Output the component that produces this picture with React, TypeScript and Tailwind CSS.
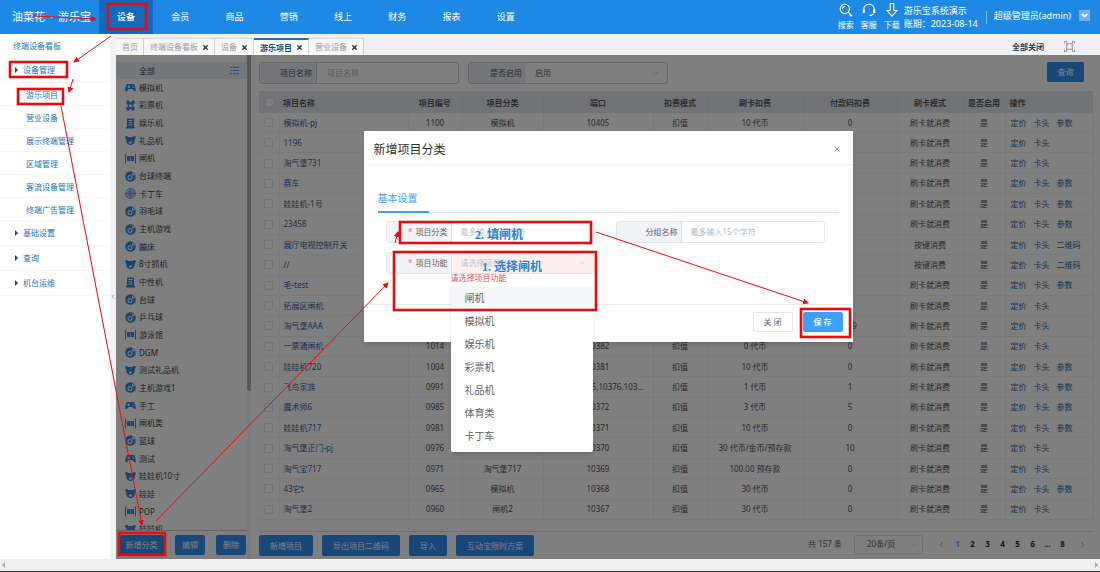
import React from "react";
import { ChevronDown, ChevronLeft, ChevronRight, ChevronUp, X } from "lucide-react";

type IconKind = "pad" | "ticket" | "cabinet" | "bear" | "gate" | "ball" | "wheel";

const NAV = ["设备", "会员", "商品", "营销", "线上", "财务", "报表", "设置"];

const TABS = [
  { label: "首页", closable: false },
  { label: "终端设备看板", closable: true },
  { label: "设备", closable: true },
  { label: "游乐项目", closable: true, active: true },
  { label: "营业设备", closable: true },
];

const SUB_MENU = ["游乐项目", "营业设备", "展示终端管理", "区域管理", "客流设备管理", "终端广告管理"];

const CATEGORIES: [IconKind, string][] = [
  ["pad", "模拟机"],
  ["ticket", "彩票机"],
  ["cabinet", "娱乐机"],
  ["bear", "礼品机"],
  ["gate", "闸机"],
  ["ball", "台球终端"],
  ["wheel", "卡丁车"],
  ["ball", "羽毛球"],
  ["ball", "主机游戏"],
  ["ball", "蹦床"],
  ["bear", "8寸抓机"],
  ["cabinet", "中性机"],
  ["ball", "台球"],
  ["ball", "乒乓球"],
  ["gate", "游泳馆"],
  ["ball", "DGM"],
  ["bear", "测试礼品机"],
  ["ball", "主机游戏1"],
  ["pad", "手工"],
  ["gate", "闸机类"],
  ["ball", "篮球"],
  ["pad", "测试"],
  ["bear", "娃娃机10寸"],
  ["bear", "娃娃"],
  ["gate", "POP"],
  ["bear", "娃娃机"],
];

type Row = [string, string, string, string, string, string, string, string];

// name, code, category, port, swipe charge, pay-code charge, swipe mode, third action
const ROWS: Row[] = [
  ["模拟机-pj", "1100", "模拟机", "10405", "10 代币", "0", "刷卡就消费", "参数"],
  ["1196", "1099", "闸机", "10404", "1 代币", "0", "刷卡就消费", ""],
  ["淘气堡731", "1098", "闸机", "10403", "1 代币", "0", "刷卡就消费", ""],
  ["赛车", "1097", "模拟机", "10402", "1 代币", "0", "刷卡就消费", "参数"],
  ["娃娃机-1号", "1096", "礼品机", "10401", "1 代币", "0", "刷卡就消费", "参数"],
  ["23458", "1095", "模拟机", "10400", "1 代币", "0", "刷卡就消费", "参数"],
  ["展厅电视控制开关", "1094", "台球终端", "10399", "1 代币", "0", "按键消费", "二维码"],
  ["//", "1093", "台球终端", "10398", "1 代币", "0", "按键消费", "二维码"],
  ["毛-test", "1092", "模拟机", "10397", "1 代币", "0", "刷卡就消费", "参数"],
  ["拓展区闸机", "1091", "闸机", "10396", "1 代币", "0", "刷卡就消费", ""],
  ["淘气堡AAA", "1015", "闸机", "10383", "1 代币", "199", "刷卡就消费", ""],
  ["一票通闸机", "1014", "闸机", "10382", "0 代币", "0", "刷卡就消费", ""],
  ["娃娃机720", "1004", "礼品机", "10381", "10 代币", "0", "刷卡就消费", "参数"],
  ["飞鸟家族", "0991", "模拟机", "10374,10375,10376,10377,10378", "1 代币", "1", "刷卡就消费", "参数"],
  ["魔术师6", "0985", "模拟机", "10372", "3 代币", "5", "刷卡就消费", "参数"],
  ["娃娃机717", "0981", "礼品机", "10371", "10 代币", "0", "刷卡就消费", "参数"],
  ["淘气堡正门-pj", "0976", "闸机", "10370", "30 代币/金币/预存款", "10", "刷卡就消费", ""],
  ["淘气宝717", "0971", "淘气堡717", "10369", "100.00 预存款", "0", "刷卡就消费", ""],
  ["43它t", "0965", "模拟机", "10368", "30 代币", "0", "刷卡就消费", "参数"],
  ["淘气堡2", "0960", "闸机2", "10367", "30 代币", "0", "刷卡就消费", ""],
];

const OPTIONS = ["闸机", "模拟机", "娱乐机", "彩票机", "礼品机", "体育类", "卡丁车"];

function CategoryIcon({ kind }: { kind: IconKind }) {
  return (
    <svg viewBox="0 0 22 22" className="size-[11px] shrink-0 text-[#3488e0]" fill="currentColor" aria-hidden="true">
      {kind === "pad" && (
        <path
          fillRule="evenodd"
          d="M5 4h12c2.500 0 4 5 4.500 12 .2 3-2.500 3.500-4 1.500L15 14H7l-2.500 3.500C3 19.500.3 19 .5 16 1 9 2.500 4 5 4Zm1.500 3v1.500H5v2h1.500V12h2v-1.500H10v-2H8.500V7h-2Zm8 0v2h2V7h-2Zm2 3v2h2v-2h-2Z"
        />
      )}
      {kind === "ticket" && (
        <path
          fillRule="evenodd"
          d="M3 1h5a3 3 0 0 0 6 0h5v7a3 3 0 0 0 0 6v7h-5a3 3 0 0 0-6 0H3v-7a3 3 0 0 0 0-6V1Zm8 6-1.500 3H7l2 2-1 3.500 3-2 3 2-1-3.500 2-2h-2.500L11 7Z"
        />
      )}
      {kind === "cabinet" && (
        <path fillRule="evenodd" d="M4 1h14v17h2v3H2v-3h2V1Zm3 3v2h8V4H7Zm0 4.500v2h8v-2H7ZM7 13v2h8v-2H7Z" />
      )}
      {kind === "bear" && (
        <path
          fillRule="evenodd"
          d="M1 2.500C3 1.500 5 2 6.500 4h9C17 2 19 1.500 21 2.500c1 2.500.3 4.500-1.500 6 .8 7-2.500 11.500-8.500 11.500S1.700 15.500 2.500 8.500C.7 7 0 5 1 2.500ZM11 13c-2 0-3 1-3 2.200 0 1.300 1.300 2.300 3 2.300s3-1 3-2.300c0-1.200-1-2.200-3-2.200Z"
        />
      )}
      {kind === "gate" && <path d="M0 1h2v20H0V1Zm20 0h2v20h-2V1ZM4 6h6.500v10H4V6Zm7.500 0H18v10h-6.500V6Z" />}
      {kind === "ball" && (
        <>
          <path
            fillRule="evenodd"
            d="M11 .5a10.500 10.500 0 1 1 0 21 10.500 10.500 0 0 1 0-21ZM10 8a5 5 0 1 0 0 10 5 5 0 0 0 0-10Zm6.500-5a3 3 0 1 0 0 6 3 3 0 0 0 0-6Z"
          />
          <circle cx="10" cy="13" r="2.800" />
          <circle cx="17" cy="5.500" r="1.400" />
        </>
      )}
      {kind === "wheel" && (
        <g fill="none" stroke="currentColor" strokeWidth="2">
          <circle cx="11" cy="11" r="9.500" />
          <circle cx="11" cy="11" r="5.500" />
          <circle cx="11" cy="11" r="1.500" />
          <path d="M11 1.500v8M11 12.500v8M1.500 11h8M12.500 11h8M4.500 4.500l5 5M12.500 12.500l5 5M17.500 4.500l-5 5M9.500 12.500l-5 5" strokeWidth="1.200" />
        </g>
      )}
    </svg>
  );
}

function Header() {
  const tools = [
    {
      label: "搜索",
      icon: (
        <>
          <circle cx="10" cy="10" r="8" />
          <path d="M16 16l6.500 6.500M6 10a4 4 0 0 1 4-4M18 22h4" />
        </>
      ),
    },
    {
      label: "客服",
      icon: (
        <>
          <path d="M3 15V11a9 9 0 0 1 18 0v4" />
          <path d="M3 11v6M21 11v6" strokeWidth="3.500" />
          <path d="M20 18c-1 2.500-3 3.500-7 3.500" />
        </>
      ),
    },
    { label: "下载", icon: <path d="M9 1h6v12h5.500L12 22.500 3.500 13H9V1Z" /> },
  ];
  return (
    <header className="flex h-[34px] shrink-0 items-stretch bg-[#1e88e5] text-[9px] text-white">
      <div className="flex w-[99px] items-center gap-[5px] pl-3 text-[11px] whitespace-nowrap">
        <span>油菜花</span>
        <span>·</span>
        <span>游乐宝</span>
      </div>
      <nav className="flex w-[434px]">
        {NAV.map((item, i) => (
          <a
            key={item}
            href="#"
            className={`flex flex-1 items-center justify-center ${i === 0 ? "bg-[#1269c0] font-medium" : ""}`}
          >
            {item}
          </a>
        ))}
      </nav>
      <div className="ml-auto flex items-center pr-[10px] whitespace-nowrap">
        <div className="flex gap-[7px]">
          {tools.map((t) => (
            <button key={t.label} type="button" className="flex flex-col items-center text-[8px] leading-[12px]">
              <svg
                viewBox="0 0 24 24"
                className="mb-[2px] size-[14px]"
                fill="none"
                stroke="currentColor"
                strokeWidth="1.800"
                aria-hidden="true"
              >
                {t.icon}
              </svg>
              {t.label}
            </button>
          ))}
        </div>
        <div className="ml-[4px] leading-[13px]">
          <div>游乐宝系统演示</div>
          <div>账期：2023-08-14</div>
        </div>
        <div className="ml-2 h-[13px] w-px bg-white/50" />
        <div className="mb-[3px] ml-[7px]">超级管理员(admin)</div>
        <button type="button" aria-label="账户菜单" className="mb-[3px] ml-2 flex size-[11px] items-center justify-center bg-[#6fb2ef]">
          <ChevronDown className="size-[9px]" strokeWidth={5} />
        </button>
      </div>
    </header>
  );
}

function Sidebar() {
  const group = "flex h-[25px] items-center gap-[5px] border-b border-[#f6f6f6] pl-[15px]";
  const arrow = <span className="h-0 w-0 border-y-[3px] border-l-[3px] border-y-transparent border-l-[#20476b]" />;
  return (
    <aside className="flex w-[116px] shrink-0 text-[8px] text-[#2277b5]">
      <div className="flex-1 bg-white">
        <a href="#" className="flex h-[24px] items-center pl-[13px]">终端设备看板</a>
        <a href="#" className={group}>{arrow}设备管理</a>
        {SUB_MENU.map((s) => (
          <a key={s} href="#" className="flex h-[23px] items-center border-b border-[#f6f6f6] pt-[2px] pl-[26px]">{s}</a>
        ))}
        {["基础设置", "查询", "机台运维"].map((s) => (
          <a key={s} href="#" className={group}>{arrow}{s}</a>
        ))}
      </div>
      <button type="button" aria-label="收起菜单" className="flex w-[6px] items-center justify-center bg-[#f2f2f2] text-[#777777]">
        <ChevronLeft className="size-[7px]" strokeWidth={3} />
      </button>
    </aside>
  );
}

function TabBar() {
  return (
    <div className="flex h-[21px] items-end bg-[#f0f0f0] text-[8px]">
      {TABS.map((t) => (
        <div
          key={t.label}
          className={`flex h-[17px] items-center gap-[4px] border-r border-[#cfcfcf] pr-[5px] pl-[6px] ${
            t.active
              ? "border-t-2 border-t-[#1d6fae] bg-white font-bold text-[#20496f]"
              : "border-t border-t-[#d6d6d6] bg-[#f7f7f7] text-[#999999]"
          }`}
        >
          <a href="#">{t.label}</a>
          {t.closable && (
            <button type="button" aria-label={`关闭${t.label}`} className="text-[#2d3f52]">
              <X className="size-[7px]" strokeWidth={5} />
            </button>
          )}
        </div>
      ))}
      <div className="ml-auto flex h-[17px] items-center gap-5 pr-[25px]">
        <button type="button" className="font-bold text-[#20395c]">全部关闭</button>
        <button type="button" aria-label="全屏">
          <svg viewBox="0 0 22 22" className="size-[11px] text-[#8a8a8a]" fill="none" stroke="currentColor" strokeWidth="1.800" aria-hidden="true">
            <path d="M5.500 5.500h11v11h-11ZM1 5V1h4l1 4.500M17 5.500 17 1h4v4M21 17v4h-4l-.5-4.500M5.500 16.500 5 21H1v-4" />
          </svg>
        </button>
      </div>
    </div>
  );
}

function PrimaryButton({ children, className = "" }: { children: React.ReactNode; className?: string }) {
  return (
    <button type="button" className={`rounded-[2px] bg-[#3190f2] whitespace-nowrap text-white ${className}`}>
      {children}
    </button>
  );
}

function CategoryPanel() {
  return (
    <section className="flex w-[131px] shrink-0 flex-col text-[#444444]">
      <div className="mt-[7px] flex h-[17px] shrink-0 items-center justify-between bg-[#e9f0f7] pr-2 pl-[23px]">
        <span>全部</span>
        <svg viewBox="0 0 20 20" className="size-[9px] text-[#3f8fe0]" stroke="currentColor" strokeWidth="2" aria-hidden="true">
          <path d="M0 3h4M6 3h14M0 10h4M6 10h14M0 17h4M6 17h14" />
        </svg>
      </div>
      <div className="min-h-0 shrink grow basis-[0px] overflow-hidden">
        <ul className="grid h-[459px] auto-rows-fr">
          {CATEGORIES.map(([kind, label]) => (
            <li key={label} className="flex items-center gap-[3px] pl-[9px]">
              <CategoryIcon kind={kind} />
              {label}
            </li>
          ))}
        </ul>
      </div>
      <div className="flex h-[29px] shrink-0 items-center justify-between border-t border-[#c8c8c8] pr-px pl-[3px]">
        <PrimaryButton className="h-5 w-[45px]">新增分类</PrimaryButton>
        <PrimaryButton className="h-5 w-[30px]">编辑</PrimaryButton>
        <PrimaryButton className="h-5 w-[30px]">删除</PrimaryButton>
      </div>
    </section>
  );
}

function ProjectTable() {
  const th = "border-r border-[#dcdfe6] p-0 pt-[2px] text-center font-bold";
  const thLeft = "p-0 pt-[2px] pl-[4px] text-left font-bold";
  const td = "truncate border-r border-b border-[#f0f2f6] p-0 text-center";
  const box = "mx-auto block size-[9px] appearance-none rounded-[1px] border border-[#e2e5ea] bg-white";
  return (
    <table className="mt-[7px] h-[429px] w-full table-fixed border-collapse leading-[12px] text-[#4e5054]">
      <colgroup>
        <col className="w-[20px]" />
        <col className="w-[129px]" />
        <col className="w-[54px]" />
        <col className="w-[81px]" />
        <col className="w-[110px]" />
        <col className="w-[54px]" />
        <col className="w-[96px]" />
        <col className="w-[94px]" />
        <col className="w-[66px]" />
        <col className="w-[42px]" />
        <col className="w-[88px]" />
      </colgroup>
      <thead>
        <tr className="h-[22px] bg-[#e4e7ed] text-[#55585e]">
          <th className="p-0"><input type="checkbox" aria-label="全选" className={box} /></th>
          <th className={thLeft}>项目名称</th>
          <th className={th}>项目编号</th>
          <th className={th}>项目分类</th>
          <th className={th}>端口</th>
          <th className={th}>扣费模式</th>
          <th className={th}>刷卡扣费</th>
          <th className={th}>付款码扣费</th>
          <th className={th}>刷卡模式</th>
          <th className={th}>是否启用</th>
          <th className={thLeft}>操作</th>
        </tr>
      </thead>
      <tbody>
        {ROWS.map(([name, code, cat, port, charge, pay, mode, extra]) => (
          <tr key={code}>
            <td className={td}><input type="checkbox" aria-label={`选择${name}`} className={box} /></td>
            <td className="truncate border-r border-b border-[#f0f2f6] p-0 pl-[4px] text-left">
              <a href="#" className="text-[#1f679f]">{name}</a>
            </td>
            <td className={td}>{code}</td>
            <td className={td}>{cat}</td>
            <td className="truncate border-r border-b border-[#f0f2f6] px-[5px] py-0 text-center">{port}</td>
            <td className={td}>扣值</td>
            <td className={td}>{charge}</td>
            <td className={td}>{pay}</td>
            <td className={td}>{mode}</td>
            <td className={td}>是</td>
            <td className="border-r border-b border-[#f0f2f6] p-0 pl-[5px]">
              <div className="flex gap-[7px] whitespace-nowrap text-[#1f679f]">
                <a href="#">定价</a>
                <a href="#">卡头</a>
                {extra && <a href="#">{extra}</a>}
              </div>
            </td>
          </tr>
        ))}
      </tbody>
    </table>
  );
}

function ProjectPanel() {
  const label = "flex items-center justify-end bg-[#e9ecf3] pr-[4px] text-[#555555]";
  return (
    <section className="flex min-w-0 flex-1 flex-col pr-[7px] pl-[8px]">
      <div className="mt-[7px] flex gap-[9px] pr-[9px]">
        <div className="flex h-[22px] w-[200px] rounded-[3px] border border-[#c8cbd2]">
          <label htmlFor="project-name" className={`${label} w-[57px] border-r border-[#c8cbd2]`}>项目名称</label>
          <input id="project-name" placeholder="项目名称" className="min-w-0 flex-1 pl-[10px] placeholder:text-[#b4b7bd]" />
        </div>
        <div className="relative flex h-[22px] w-[200px] rounded-[3px] border border-[#c8cbd2]">
          <label htmlFor="enabled" className={`${label} w-[57px]`}>是否启用</label>
          <select id="enabled" className="min-w-0 flex-1 appearance-none pl-[9px] text-[#666666]">
            <option>启用</option>
            <option>停用</option>
          </select>
          <ChevronDown className="pointer-events-none absolute top-[6px] right-[7px] size-[9px] text-[#b0b3ba]" />
        </div>
        <PrimaryButton className="ml-auto h-[20px] w-[37px]">查询</PrimaryButton>
      </div>
      <ProjectTable />
      <div className="mt-auto flex h-[28px] items-center gap-[9px] border-t border-[#dcdfe6]">
        <PrimaryButton className="h-[21px] px-[11px]">新增项目</PrimaryButton>
        <PrimaryButton className="h-[21px] px-[11px]">导出项目二维码</PrimaryButton>
        <PrimaryButton className="h-[21px] px-[11px]">导入</PrimaryButton>
        <PrimaryButton className="h-[21px] px-[11px]">互动宝限时方案</PrimaryButton>
        <div className="mb-[3px] ml-auto flex items-center pr-[2px] text-[#606266]">
          <span className="pr-[2px]">共 157 条</span>
          <div className="relative ml-[10px]">
            <select aria-label="每页条数" className="h-[19px] w-[69px] appearance-none rounded-[2px] border border-[#dcdfe6] pl-[12px]">
              <option>20条/页</option>
            </select>
            <ChevronDown className="pointer-events-none absolute top-[6px] right-[5px] size-[7px] text-[#c0c4cc]" />
          </div>
          <nav aria-label="分页" className="ml-[9px] flex font-bold text-[#303133]">
            <button type="button" aria-label="上一页" className="flex w-[18px] items-center justify-center">
              <ChevronLeft className="size-[9px] text-[#909399]" />
            </button>
            {["1", "2", "3", "4", "5", "6", "...", "8"].map((p) => (
              <button key={p} type="button" className={`w-[15px] ${p === "1" ? "text-[#409eff]" : ""}`}>{p}</button>
            ))}
            <button type="button" aria-label="下一页" className="ml-[3px] flex w-[18px] items-center justify-center">
              <ChevronRight className="size-[9px] text-[#909399]" />
            </button>
          </nav>
        </div>
      </div>
    </section>
  );
}

function CategoryDialog() {
  const label = "flex w-[65px] items-center justify-end gap-[3px] border-r border-[#dcdfe6] bg-[#f1f3f6] pr-[3px] text-[#606266]";
  const field = "flex h-[22px] rounded-[3px] border border-[#e2e5ea]";
  return (
    <div role="dialog" aria-labelledby="dialog-title" className="flex h-[211px] w-[489px] flex-col rounded-[1px] bg-white shadow-md">
      <div className="flex h-[34px] items-center justify-between border-b border-[#f2f2f2] pt-[3px] pr-[11px] pl-[10px]">
        <h2 id="dialog-title" className="pt-[2px] text-[12px] text-[#333333]">新增项目分类</h2>
        <button type="button" aria-label="关闭对话框">
          <X className="size-[10px] text-[#909399]" strokeWidth={2} />
        </button>
      </div>
      <form className="flex-1 px-[14px]">
        <div className="flex h-[48px] items-end border-b border-[#dfe4ed]">
          <span className="-mb-px w-[51px] border-b-2 border-[#409eff] pb-[5px] text-[10px] leading-[15px] text-[#409eff]">基本设置</span>
        </div>
        <div className="grid grid-cols-[208px_209px] gap-x-[22px] gap-y-[9px] pt-[8px] pl-[8px]">
          <div className={field}>
            <label htmlFor="category" className={label}><span className="text-[#f56c6c]">*</span>项目分类</label>
            <input id="category" placeholder="最多输入15个字符" className="min-w-0 flex-1 pl-[9px] placeholder:text-[#c0c4cc]" />
          </div>
          <div className={field}>
            <label htmlFor="group" className={label}>分组名称</label>
            <input id="group" placeholder="最多输入15个字符" className="min-w-0 flex-1 pl-[9px] placeholder:text-[#b4b9c2]" />
          </div>
          <div className="relative">
            <div className={field}>
              <label htmlFor="feature" className={label}><span className="text-[#f56c6c]">*</span>项目功能</label>
              <button
                id="feature"
                type="button"
                role="combobox"
                aria-expanded="true"
                aria-controls="feature-options"
                className="flex flex-1 items-center justify-between bg-[#fff0f0] pr-[6px] pl-[9px] text-[#c0c4cc]"
              >
                请选择项目功能
                <ChevronUp className="size-[10px]" />
              </button>
            </div>
            <p className="absolute top-[20px] left-[65px] leading-[12px] text-[#e0524f]">请选择项目功能</p>
            <ul
              id="feature-options"
              role="listbox"
              className="absolute top-[31px] left-[65px] w-[142px] rounded-[2px] bg-white pt-[4px] pb-[4px] text-[10px] text-[#606266] shadow-md"
            >
              {OPTIONS.map((o, i) => (
                <li
                  key={o}
                  role="option"
                  aria-selected={i === 0}
                  className={`flex h-[23px] items-center pl-[14px] ${i === 0 ? "bg-[#f5f7fa]" : ""}`}
                >
                  {o}
                </li>
              ))}
            </ul>
          </div>
        </div>
      </form>
      <div className="flex h-[38px] items-center justify-end gap-[10px] border-t border-[#ebebeb] pr-[10px] pb-[3px]">
        <button type="button" className="h-[20px] w-[40px] rounded-[2px] border border-[#e4e7ed] text-[#606266]">关 闭</button>
        <button type="button" className="h-[20px] w-[40px] rounded-[2px] bg-[#409eff] font-medium text-white">保 存</button>
      </div>
    </div>
  );
}

function Guide() {
  const boxes = [
    [108, 4, 38, 25],
    [10, 62, 57, 15],
    [18, 89, 45, 15],
    [119, 533, 46, 22],
    [394, 252, 202, 58],
    [400, 222, 191, 21],
    [801, 309, 49, 28],
  ];
  const arrows = [
    [34, 16, 96, 19],
    [111, 36, 74, 62],
    [73, 79, 69, 92],
    [61, 106, 142, 525],
    [156, 521, 388, 283],
    [395, 243, 398, 232],
    [596, 232, 808, 303],
  ];
  return (
    <div className="pointer-events-none absolute top-0 left-0 font-['Liberation_Serif','Noto_Sans_CJK_SC',serif] text-[12px] leading-[14px] font-bold text-[#1f86dc]">
      <svg width="1100" height="572" viewBox="0 0 1100 572" fill="none" stroke="#e60c10" className="block" aria-hidden="true">
        <defs>
          <marker id="head" markerWidth="7" markerHeight="7" refX="5" refY="3" orient="auto" markerUnits="userSpaceOnUse">
            <path d="M0 0 6 3 0 6Z" fill="#e60c10" stroke="none" />
          </marker>
        </defs>
        {boxes.map(([x, y, w, h]) => (
          <rect key={`${x}-${y}`} x={x} y={y} width={w} height={h} strokeWidth="2.600" />
        ))}
        {arrows.map(([x1, y1, x2, y2]) => (
          <line key={`${x1}-${y1}`} x1={x1} y1={y1} x2={x2} y2={y2} strokeWidth="1" markerEnd="url(#head)" />
        ))}
      </svg>
      <span className="absolute top-[228px] left-[475px] whitespace-nowrap">2. 填闸机</span>
      <span className="absolute top-[260px] left-[482px] whitespace-nowrap">1. 选择闸机</span>
    </div>
  );
}

export default function App() {
  return (
    <div className="relative flex min-h-screen flex-col overflow-hidden bg-white font-['Noto_Sans','Noto_Sans_CJK_SC',sans-serif] text-[8px]">
      <Header />
      <div className="flex flex-1">
        <Sidebar />
        <div className="flex min-w-0 flex-1 flex-col">
          <TabBar />
          <main className="relative flex flex-1">
            <CategoryPanel />
            <div className="w-[4px] shrink-0 bg-[#f4f4f4]">
              <div className="h-2/3 rounded-b-[2px] bg-[#b0b0b0]" />
            </div>
            <ProjectPanel />
            <div className="absolute inset-0 flex items-start justify-center bg-black/50 pt-[76px]">
              <CategoryDialog />
            </div>
          </main>
        </div>
      </div>
      <div className="flex h-[12px] shrink-0 items-center justify-between bg-[#f0f0f0] px-[2px]">
        <span className="h-0 w-0 border-y-[3px] border-r-[3px] border-y-transparent border-r-[#a8a8a8]" />
        <span className="h-0 w-0 border-y-[3px] border-l-[3px] border-y-transparent border-l-[#a8a8a8]" />
      </div>
      <div className="h-px shrink-0 bg-[#333338]" />
      <Guide />
    </div>
  );
}
